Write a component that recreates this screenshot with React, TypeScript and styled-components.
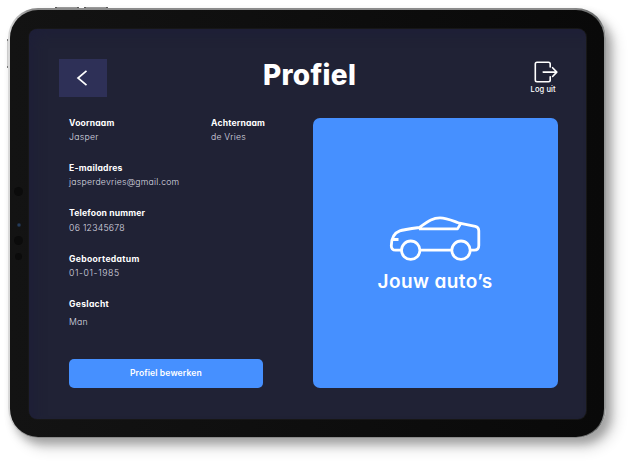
import React from "react";
import styled, { createGlobalStyle } from "styled-components";

const Global = createGlobalStyle`
  * { box-sizing: border-box; }
  html, body { margin: 0; background: #fff; }
  body {
    width: 631px; height: 464px; overflow: hidden;
    font-family: Inter, "Open Sans", sans-serif;
    font-feature-settings: "cv11", "liga" 0;
    color: #fff;
  }
`;

const Stage = styled.div`
  width: 631px;
  height: 464px;
  padding: 8px;
  background: #fff;
`;

const Tablet = styled.div`
  position: relative;
  width: 598px;
  height: 430px;
  padding: 2px 2px 1px;
  border-radius: 30px;
  background: linear-gradient(90deg, #dcdcdc 0, #8b8b8b 22px, #8b8b8b 565px, #5f6161 590px, #a0a2a2 100%);
  box-shadow: 5px 6px 8px rgba(0, 0, 0, 0.25), 9px 10px 14px rgba(0, 0, 0, 0.16);
`;

const Bezel = styled.div`
  height: 427px;
  padding: 19px 18px 18px 19px;
  border-radius: 28px;
  background: linear-gradient(90deg, #131313, #090909);
`;

const Screen = styled.main`
  height: 389.500px;
  padding: 30px 28.4px 30px 29.6px;
  border-radius: 8px;
  background: #202235;
  box-shadow: inset 8px 8px 12px -3px rgba(28, 28, 58, 0.5), 0 0 0 1px #171717;
`;

const Header = styled.header`
  display: grid;
  grid-template-columns: 48px 1fr 48px;
  height: 59.400px;
`;

const BackButton = styled.button`
  display: flex;
  align-items: center;
  justify-content: center;
  width: 48px;
  height: 38px;
  padding: 0 2px 0 0;
  border: 0;
  background: #2e3057;
`;

const Title = styled.h1`
  margin: -1px 0 0 3px;
  text-align: center;
  font-size: 28px;
  line-height: 34px;
  font-weight: 800;
  letter-spacing: 0.3px;
`;

const Logout = styled.button`
  display: flex;
  flex-direction: column;
  align-items: flex-start;
  margin: 2px 0 0 16px;
  padding: 0;
  border: 0;
  background: none;
  color: #fff;
  font: 500 7.500px/10px Inter, sans-serif;
  letter-spacing: 0.1px;
  white-space: nowrap;
  & > span { margin: 2px 0 0 5px; }
  & > svg { margin-left: 8px; }
`;

const Content = styled.div`
  display: grid;
  grid-template-columns: 1fr 245px;
  height: 269.500px;
`;

const Profile = styled.section`
  display: flex;
  flex-direction: column;
  justify-content: space-between;
  padding: 0 0 0 10.500px;
  margin-top: -2.400px;
`;

const Fields = styled.dl`
  display: grid;
  grid-template-columns: 142px 1fr;
  grid-auto-rows: 45.200px;
  margin: 0;
`;

const Field = styled.div<{ $full?: boolean }>`
  grid-column: ${(p) => (p.$full ? "1 / -1" : "auto")};
`;

const Label = styled.dt<{ $track: number }>`
  font-size: 8.600px;
  line-height: 14px;
  font-weight: 700;
  letter-spacing: ${(p) => p.$track}px;
  white-space: nowrap;
`;

const Value = styled.dd<{ $track: number; $gap?: number }>`
  margin: ${(p) => p.$gap ?? 0.3}px 0 0;
  font-size: 8.700px;
  line-height: 14px;
  font-weight: 300;
  color: #dcdce2;
  letter-spacing: ${(p) => p.$track}px;
  white-space: nowrap;
`;

const EditButton = styled.button`
  width: 193.500px;
  height: 29px;
  padding: 0 0 1px;
  border: 0;
  border-radius: 5px;
  background: #4690ff;
  color: #fff;
  font: 600 8.600px/14px Inter, sans-serif;
  font-feature-settings: "cv11", "liga" 0;
  letter-spacing: 0.1px;
`;

const CarCard = styled.section`
  display: flex;
  flex-direction: column;
  align-items: center;
  padding-top: 96.600px;
  border-radius: 7px;
  background: #4690ff;
`;

const CardTitle = styled.h2`
  margin: 9px 0 0;
  font-size: 19px;
  line-height: 24px;
  font-weight: 600;
  letter-spacing: 0.400px;
`;

const Lens = styled.i<{ $y: number; $size: number; $blue?: boolean }>`
  position: absolute;
  left: ${(p) => 10.5 - p.$size / 2}px;
  top: ${(p) => p.$y - p.$size / 2}px;
  width: ${(p) => p.$size}px;
  height: ${(p) => p.$size}px;
  border-radius: 50%;
  background: ${(p) => (p.$blue ? "radial-gradient(#29466e, #151a20)" : "#0b0b0b")};
`;

const SideKey = styled.i<{ $x: number; $y: number; $w: number; $h: number; $light?: boolean }>`
  position: absolute;
  left: ${(p) => p.$x}px;
  top: ${(p) => p.$y}px;
  width: ${(p) => p.$w}px;
  height: ${(p) => p.$h}px;
  background: ${(p) =>
    p.$light
      ? "linear-gradient(#777 0 2px, #ccc 2px calc(100% - 2px), #777 calc(100% - 2px))"
      : "linear-gradient(90deg, #555 0 2px, #999 2px calc(100% - 2px), #555 calc(100% - 2px))"};
`;

const fields = [
  { label: "Voornaam", value: "Jasper", labelTrack: 0.16, valueTrack: 0.25 },
  { label: "Achternaam", value: "de Vries", labelTrack: 0.16, valueTrack: 0.18 },
  { label: "E-mailadres", value: "jasperdevries@gmail.com", labelTrack: 0.2, valueTrack: 0.22, full: true },
  { label: "Telefoon nummer", value: "06 12345678", labelTrack: 0.15, valueTrack: 0.26, full: true },
  { label: "Geboortedatum", value: "01-01-1985", labelTrack: 0.3, valueTrack: 0.6, full: true },
  { label: "Geslacht", value: "Man", labelTrack: 0.27, valueTrack: 0.15, full: true, gap: 4 },
];

export default function App() {
  return (
    <Stage>
      <Global />
      <Tablet>
        <SideKey $x={47} $y={-1} $w={24} $h={1} />
        <SideKey $x={76} $y={-1} $w={24} $h={1} />
        <SideKey $x={-1} $y={31} $w={1} $h={29} $light />
        <Bezel>
          <Screen>
            <Header>
              <BackButton aria-label="Terug">
                <svg width="12" height="16" viewBox="0 0 12 16" fill="none" stroke="#fff" strokeWidth="1.7">
                  <path d="M10.500 .8 2 8 10.500 15.200" />
                </svg>
              </BackButton>
              <Title>Profiel</Title>
              <Logout>
                <svg width="24" height="22" viewBox="0 0 24 22" fill="none" stroke="#fff" strokeWidth="1.6" strokeLinecap="round" strokeLinejoin="round">
                  <path d="M16.200 6V3q0-1.700-1.700-1.700H3Q1.300 1.300 1.300 3v16q0 1.700 1.700 1.700h11.500q1.700 0 1.700-1.700v-3.200M9.200 11.100h13.600M18.600 6.700l4.200 4.400-4.200 4.400" />
                </svg>
                <span>Log uit</span>
              </Logout>
            </Header>
            <Content>
              <Profile>
                <Fields>
                  {fields.map((f) => (
                    <Field key={f.label} $full={f.full}>
                      <Label $track={f.labelTrack}>{f.label}</Label>
                      <Value $track={f.valueTrack} $gap={f.gap}>{f.value}</Value>
                    </Field>
                  ))}
                </Fields>
                <EditButton>Profiel bewerken</EditButton>
              </Profile>
              <CarCard>
                <svg width="92" height="46" viewBox="0 0 92 46" fill="none" stroke="#fff" strokeWidth="2.8" strokeLinejoin="round">
                  <path d="M12 35.200H6.500q-4.200 0-4.200-4.500c.2-9 3-12.800 8.500-14.800q3-1.100 19.500-3.400C40 5.700 44 2.800 51 2.800c6 0 10.300 2 18.300 5l17 3.500q3.500.8 3.500 4.500v14.700q0 4.700-4.500 4.700H82M31.500 35.200h31M30 13.900h38.500l3.200-5.300M3.500 24.500h6" />
                  <circle cx="21.700" cy="35.200" r="9.200" />
                  <circle cx="72" cy="35.200" r="9.200" />
                </svg>
                <CardTitle>Jouw auto’s</CardTitle>
              </CarCard>
            </Content>
          </Screen>
        </Bezel>
        <Lens $y={183.5} $size={9} />
        <Lens $y={216.5} $size={4} $blue />
        <Lens $y={232.5} $size={9} />
        <Lens $y={248.5} $size={7} />
      </Tablet>
    </Stage>
  );
}
